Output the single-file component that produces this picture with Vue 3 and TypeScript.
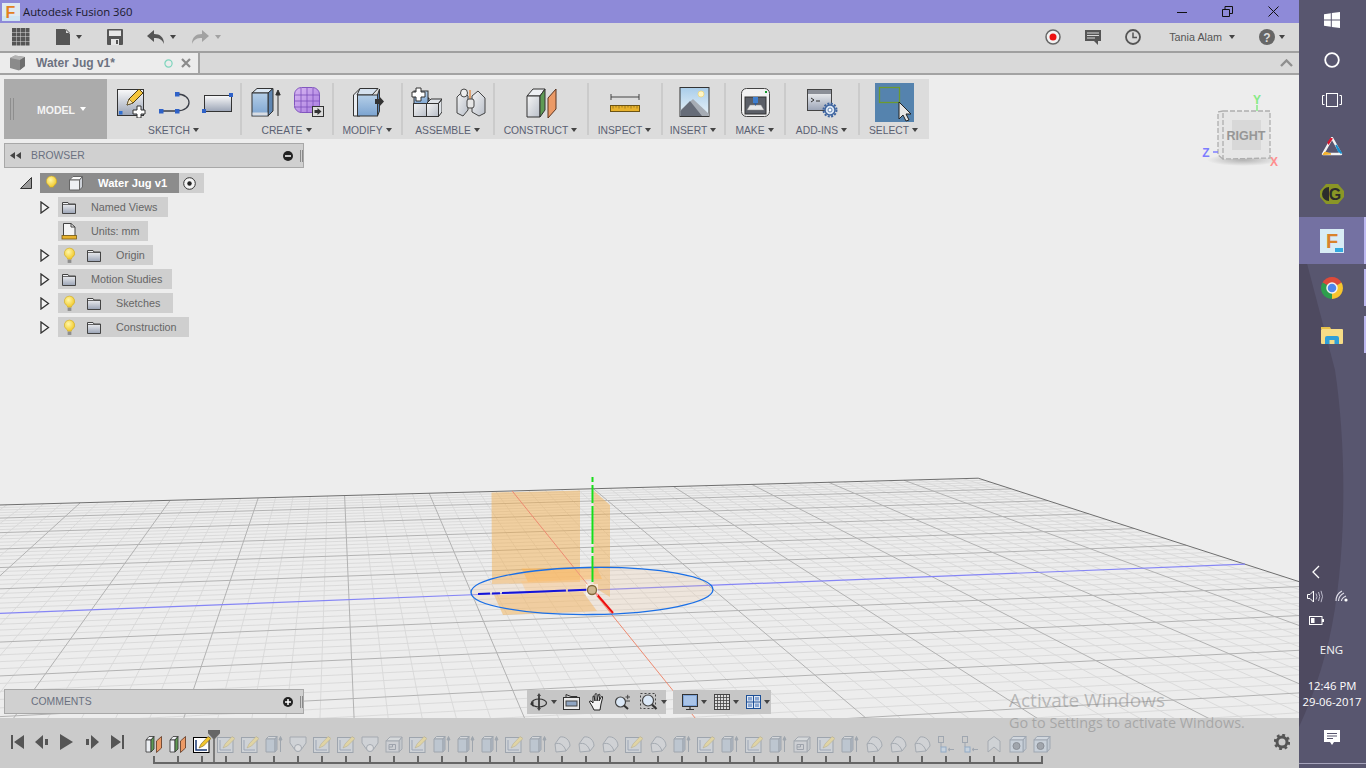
<script setup lang="ts">
const A = 0.0848, B = 0.45
function P(u: number, v: number): string {
  const d = 1 + u * A + v * B
  const x = (u * A * 8945 + v * B * 335 + 592) / d
  const y = (u * A * 260 + v * B * 271 + 590) / d
  return `${x.toFixed(1)},${y.toFixed(1)}`
}
interface GL { pts: string }
const minor: GL[] = []
const major: GL[] = []
for (let k = -30; k <= 30; k++) {
  const t = k / 30
  const list = k % 5 === 0 ? major : minor
  if (Math.abs(k) !== 30 && k !== 0) {
    list.push({ pts: `${P(t, -1)} ${P(t, 1)}` })
    list.push({ pts: `${P(-1, t)} ${P(1, t)}` })
  }
}
const edge = `${P(-1, 1)} ${P(1, 1)} ${P(1, -1)}`
const blueAxis = `${P(-1, 0)} ${P(1, 0)}`
const redAxis = `${P(0, 1)} ${P(0, -1)}`

const groups = [
  { label: 'SKETCH', w: 134, icons: ['sk-new', 'sk-arc', 'sk-rect'] },
  { label: 'CREATE', w: 92, icons: ['cr-ext', 'cr-form'] },
  { label: 'MODIFY', w: 69, icons: ['mod'] },
  { label: 'ASSEMBLE', w: 92, icons: ['asm', 'joint'] },
  { label: 'CONSTRUCT', w: 94, icons: ['con'] },
  { label: 'INSPECT', w: 74, icons: ['ins'] },
  { label: 'INSERT', w: 63, icons: ['pic'] },
  { label: 'MAKE', w: 60, icons: ['make'] },
  { label: 'ADD-INS', w: 74, icons: ['add'] },
]

const tree = [
  { label: 'Named Views', bulb: false, icon: 'folder', toggle: true, w: 110 },
  { label: 'Units: mm', bulb: false, icon: 'units', toggle: false, w: 90 },
  { label: 'Origin', bulb: true, icon: 'folder', toggle: true, w: 95 },
  { label: 'Motion Studies', bulb: false, icon: 'folder', toggle: true, w: 114 },
  { label: 'Sketches', bulb: true, icon: 'folder', toggle: true, w: 115 },
  { label: 'Construction', bulb: true, icon: 'folder', toggle: true, w: 131 },
]

const seq = 'c c S k k e p k k p b k e e e k e f f f k f e k e k e b k e f f f s s l o o'.split(' ')
const tlMap: Record<string, string> = {
  c: 't-con', S: 't-sel', k: 't-sk', e: 't-ext', p: 't-plug', b: 't-box',
  f: 't-fil', s: 't-split', l: 't-loft', o: 't-coin',
}
const timeline = seq.map((s) => ({ id: tlMap[s], faded: s !== 'c' && s !== 'S' }))
const gridCells = Array.from({ length: 16 }, (_, i) => ({ x: (i % 4) * 4.5, y: Math.floor(i / 4) * 4.5 }))
</script>

<template>
  <div class="screen">
    <svg class="sprite" aria-hidden="true">
      <defs>
        <linearGradient id="gSheet" x1="0" y1="0" x2="0" y2="1"><stop offset="0" stop-color="#fafafa"/><stop offset="1" stop-color="#9aa3b5"/></linearGradient>
        <linearGradient id="gBlue" x1="0" y1="0" x2="0" y2="1"><stop offset="0" stop-color="#b5cfe8"/><stop offset="1" stop-color="#7ba3d0"/></linearGradient>
        <linearGradient id="gGrey" x1="0" y1="0" x2="1" y2="1"><stop offset="0" stop-color="#f5f5f5"/><stop offset="1" stop-color="#b9bfc9"/></linearGradient>
        <linearGradient id="gSky" x1="0" y1="0" x2="0" y2="1"><stop offset="0" stop-color="#a9cdea"/><stop offset="1" stop-color="#eaf3f8"/></linearGradient>
        <linearGradient id="gPurple" x1="0" y1="0" x2="1" y2="1"><stop offset="0" stop-color="#d9b8f2"/><stop offset="1" stop-color="#a77adf"/></linearGradient>
        <radialGradient id="gBulb" cx=".4" cy=".35" r=".7"><stop offset="0" stop-color="#fff7a8"/><stop offset="1" stop-color="#f0c520"/></radialGradient>
      </defs>

      <symbol id="sk-new" viewBox="0 0 32 32">
        <rect x="3.5" y="3.5" width="26" height="26" fill="url(#gSheet)" stroke="#333"/>
        <rect x="5" y="25" width="3.5" height="3.5" fill="#2f6fd0"/>
        <path d="M13 19l2-6 10-10 4 4-10 10z" fill="#f4c53c" stroke="#4a3b15"/>
        <path d="M13 19l2-6 4 4z" fill="#f7e6bd" stroke="#4a3b15" stroke-width=".6"/>
        <path d="M23 20h4v4h4v4h-4v4h-4v-4h-4v-4h4z" fill="#fff" stroke="#333"/>
      </symbol>
      <symbol id="sk-arc" viewBox="0 0 32 32">
        <path d="M3 25H19M19 8C35 8 35 25 19 25" fill="none" stroke="#3b3f48" stroke-width="1.3"/>
        <rect x="1" y="23" width="4.5" height="4.5" fill="#2f62c8"/><rect x="17" y="23" width="4.5" height="4.5" fill="#2f62c8"/><rect x="17" y="6" width="4.5" height="4.5" fill="#2f62c8"/>
      </symbol>
      <symbol id="sk-rect" viewBox="0 0 32 32">
        <rect x="2.5" y="9.5" width="27" height="16" fill="url(#gSheet)" stroke="#333"/>
        <rect x="27" y="7" width="4" height="4" fill="#2f62c8"/><rect x="0" y="23" width="4" height="4" fill="#2f62c8"/>
      </symbol>
      <symbol id="cr-ext" viewBox="0 0 32 32">
        <path d="M3 7L8 2.5H24L19 7z" fill="#dbe7f3" stroke="#333"/>
        <path d="M19 7L24 2.5V25L19 30z" fill="#5f86b2" stroke="#333"/>
        <rect x="3" y="7" width="16" height="23" fill="url(#gBlue)" stroke="#333"/>
        <rect x="3.5" y="26.5" width="15" height="3" fill="#d9dde3"/>
        <path d="M29 30V6M26.8 9L29 4L31.2 9z" stroke="#333" fill="#333"/>
      </symbol>
      <symbol id="cr-form" viewBox="0 0 32 32">
        <rect x="1.5" y="1.5" width="25" height="25" rx="7" fill="url(#gPurple)" stroke="#8257bf"/>
        <path d="M1 9H27M1 15H27M1 21H27M8 2V27M14 2V27M20 2V27" stroke="#7c4fbb" stroke-width=".8" fill="none"/>
        <rect x="19.5" y="20.5" width="11" height="10" fill="#dcdcdc" stroke="#333"/>
        <path d="M21.5 24h3v-2l4 3.5-4 3.5v-2h-3z" fill="#333"/>
      </symbol>
      <symbol id="mod" viewBox="0 0 32 32">
        <path d="M1.5 9L8 2.5V30H1.5z" fill="#e9edf2" stroke="#333"/>
        <path d="M8 2.5H26L20 9H5z" fill="#d5e1ee" stroke="#333"/>
        <rect x="5.5" y="9" width="20" height="21" fill="url(#gBlue)" stroke="#333"/>
        <path d="M25.5 9l2-6V25l-2 5z" fill="#5d83af" stroke="#333"/>
        <path d="M23 13h4v-3l5 5.5-5 5.5v-3h-4z" fill="#333"/>
      </symbol>
      <symbol id="asm" viewBox="0 0 32 32">
        <path d="M5 16L9 12H19L15 16zM15 16L19 12V20L15 24z" fill="#7ba3d0" stroke="#333"/>
        <rect x="4" y="5" width="14" height="14" fill="url(#gBlue)" stroke="#333"/>
        <rect x="3.5" y="17.5" width="13" height="13" fill="url(#gGrey)" stroke="#333"/>
        <rect x="16.5" y="17.5" width="12" height="13" fill="url(#gGrey)" stroke="#333"/>
        <path d="M16.5 17.5L21 13H32L28.5 17.5zM28.5 17.5L32 13V26L28.5 30.5z" fill="#dfe3e8" stroke="#333"/>
        <path d="M6 2h5v4h4v5h-4v4H6v-4H2V6h4z" fill="#fff" stroke="#333"/>
      </symbol>
      <symbol id="joint" viewBox="0 0 32 32">
        <path d="M3 11L9 5 14 10V24L9 30 3 27z" fill="url(#gGrey)" stroke="#444"/>
        <path d="M18 10L24 5 31 12V27L25 30 18 26z" fill="url(#gGrey)" stroke="#444"/>
        <ellipse cx="10" cy="7" rx="3.5" ry="4" fill="#eee" stroke="#444"/>
        <path d="M16 4V22" stroke="#e0843a" stroke-width="1.3"/>
        <rect x="13" y="13" width="7" height="9" rx="2" fill="#e7e7e7" stroke="#444"/>
      </symbol>
      <symbol id="con" viewBox="0 0 32 32">
        <path d="M2 10L8 3H20L15 10z" fill="#eef0f3" stroke="#333"/>
        <path d="M2 10H15V31H2z" fill="url(#gGrey)" stroke="#333"/>
        <path d="M15 10L20 3V24L15 31z" fill="#5e9a54" stroke="#333"/>
        <path d="M23 12L31 3V23L23 32z" fill="#ec9a66" stroke="#5a3420"/>
      </symbol>
      <symbol id="ins" viewBox="0 0 32 32">
        <path d="M2 8v6M2 11H30M30 8v6" stroke="#444" fill="none"/>
        <rect x="1.5" y="19.5" width="29" height="6" fill="#e8b22c" stroke="#6d5414"/>
        <path d="M4 19.5v3M7 19.5v2M10 19.5v3M13 19.5v2M16 19.5v3M19 19.5v2M22 19.5v3M25 19.5v2M28 19.5v3" stroke="#6d5414" stroke-width=".6"/>
      </symbol>
      <symbol id="pic" viewBox="0 0 32 32">
        <rect x="2" y="1.5" width="29" height="29" fill="url(#gSky)" stroke="#333"/>
        <circle cx="23" cy="8" r="3" fill="#fff6c6" stroke="#f0d060" stroke-width=".6"/>
        <path d="M2.5 24L15 13 31 28V30H2.5z" fill="#a6acb4"/>
        <path d="M2.5 25L12 15 24 30H2.5z" fill="#666c78"/>
      </symbol>
      <symbol id="make" viewBox="0 0 32 32">
        <rect x="2.5" y="2.5" width="28" height="28" rx="5" fill="#f2f2f2" stroke="#444"/>
        <rect x="6" y="11" width="21" height="17" fill="#5b5f67" stroke="#333"/>
        <rect x="26" y="5" width="2" height="2" fill="#139a2a"/>
        <path d="M8 24L11 19H22L25 24z" fill="#e7e7e7" stroke="#888" stroke-width=".5"/>
        <rect x="14" y="11" width="5" height="6" fill="#3f7fd0"/><path d="M15 17h3l-1.5 3z" fill="#2b5da0"/>
      </symbol>
      <symbol id="add" viewBox="0 0 32 32">
        <rect x="1.5" y="3.5" width="24" height="21" fill="url(#gSheet)" stroke="#444"/>
        <rect x="2" y="4" width="23" height="4" fill="#8b8f98"/>
        <path d="M5 12l3 2-3 2M10 15h4" stroke="#333" fill="none"/>
        <circle cx="24" cy="24" r="5" fill="#dbe7f5" stroke="#3d64a0" stroke-width="1.5"/>
        <circle cx="24" cy="24" r="6.5" fill="none" stroke="#3d64a0" stroke-width="2" stroke-dasharray="2 1.4"/>
        <circle cx="24" cy="24" r="2" fill="#fff" stroke="#3d64a0" stroke-width=".8"/>
      </symbol>
      <symbol id="sel" viewBox="0 0 40 40">
        <rect x="1" y="0" width="39" height="39" fill="#5583ae"/>
        <rect x="5.5" y="4.5" width="20" height="15" fill="none" stroke="#6d9a2f" stroke-width="1.3"/>
        <path d="M25 19V36L29 32 32 38 35 37 32 31H37z" fill="#e6e6e6" stroke="#222"/>
      </symbol>

      <symbol id="folder" viewBox="0 0 16 16">
        <path d="M1.5 3.5H7L8 5H14.5V14.5H1.5z" fill="url(#gSheet)" stroke="#444"/>
        <path d="M1.5 5.5H14.5" stroke="#444" stroke-width=".8"/>
      </symbol>
      <symbol id="units" viewBox="0 0 16 18">
        <path d="M2.5 1.5H10L14 5V14H2.5z" fill="#f4f4f4" stroke="#444"/>
        <path d="M10 1.5V5H14" fill="none" stroke="#444"/>
        <rect x="1" y="13.5" width="14.5" height="3.5" fill="#e8b22c" stroke="#7a5c14" stroke-width=".8"/>
      </symbol>
      <symbol id="bulb" viewBox="0 0 14 18">
        <path d="M7 1a5.5 5.5 0 0 1 3.2 10c-.7.6-1.2 1-1.2 2H5c0-1-.5-1.4-1.2-2A5.5 5.5 0 0 1 7 1z" fill="url(#gBulb)" stroke="#caa41d" stroke-width=".6"/>
        <rect x="5" y="13.5" width="4" height="3.5" fill="#8d8d8d"/>
      </symbol>
      <symbol id="cube" viewBox="0 0 16 16">
        <path d="M1.5 5L5 1.5H14.5L11.5 5z" fill="#fafafa" stroke="#666"/>
        <path d="M1.5 5H11.5V15H1.5z" fill="#eef0f3" stroke="#666"/>
        <path d="M11.5 5L14.5 1.5V12L11.5 15z" fill="#cdd1d8" stroke="#666"/>
      </symbol>

      <symbol id="t-con" viewBox="0 0 18 18">
        <path d="M1 5L4 1.5H9L6 5z" fill="#eef0f3" stroke="#333" stroke-width=".8"/>
        <path d="M1 5H6V17H1z" fill="#eceff3" stroke="#333" stroke-width=".8"/>
        <path d="M6 5L9 1.5V14L6 17z" fill="#5e9a54" stroke="#333" stroke-width=".8"/>
        <path d="M11.5 6L16.5 1.5V13L11.5 17.5z" fill="#ec9a66" stroke="#5a3420" stroke-width=".8"/>
      </symbol>
      <symbol id="t-sel" viewBox="0 0 18 18">
        <rect x=".5" y="2.5" width="15.5" height="15" fill="#fff" stroke="#000"/>
        <path d="M3 5V15H14" fill="none" stroke="#1b3a74" stroke-width="1.5"/>
        <path d="M6 13L8 9 15 1.5 18 3.5 10.5 11z" fill="#f2c62e" stroke="#5d4713" stroke-width=".5"/>
      </symbol>
      <symbol id="t-sk" viewBox="0 0 18 18">
        <rect x=".5" y="2.5" width="15.5" height="15" fill="#d0d5dc" stroke="#8b95a2"/>
        <path d="M3 5V15H14" fill="none" stroke="#8b98ad" stroke-width="1"/>
        <path d="M6 13L8 9 15 1.5 18 3.5 10.5 11z" fill="#e9d894" stroke="#a89f73" stroke-width=".5"/>
      </symbol>
      <symbol id="t-ext" viewBox="0 0 18 18">
        <path d="M1 4L3.5 1.5H12L10 4z" fill="#d9dde2" stroke="#8d97a3"/>
        <path d="M1 4H10V17H1z" fill="#b8c5d3" stroke="#8d97a3"/>
        <path d="M10 4L12 1.5V14.5L10 17z" fill="#a3b1c1" stroke="#8d97a3"/>
        <path d="M15.5 17V3M14 5L15.5 1.5 17 5z" stroke="#8d97a3" fill="#8d97a3"/>
      </symbol>
      <symbol id="t-plug" viewBox="0 0 18 18">
        <path d="M1 2H17V8L12 15C10 17 8 17 6 15L1 8z" fill="#d2d6db" stroke="#949ca6"/>
        <circle cx="9" cy="13" r="3.5" fill="#e4e6e8" stroke="#949ca6"/>
      </symbol>
      <symbol id="t-box" viewBox="0 0 18 18">
        <path d="M1 6L5 2H17L14 6z" fill="#dcdfe3" stroke="#949ca6"/>
        <path d="M14 6L17 2V14L14 17z" fill="#c2c7cd" stroke="#949ca6"/>
        <rect x="1" y="6" width="13" height="11" fill="#ced2d7" stroke="#949ca6"/>
        <path d="M4 9.5H10.5V14.5H4zM4 12H7.5V9.5" fill="none" stroke="#8b93a0"/>
      </symbol>
      <symbol id="t-fil" viewBox="0 0 18 18">
        <path d="M2 9L7 2C12 1 17 5 17 11L13 16 3 17z" fill="#d3d6da" stroke="#949ca6"/>
        <path d="M2 9C7 7 11 10 13 16" fill="none" stroke="#949ca6"/>
      </symbol>
      <symbol id="t-split" viewBox="0 0 18 18">
        <rect x="1.5" y="1.5" width="5" height="6" fill="none" stroke="#8f98a6"/>
        <path d="M4 7.5V12" stroke="#8f98a6"/>
        <rect x="4" y="12" width="5" height="5" fill="#c6d6e6" stroke="#7d9dc2"/>
        <path d="M17 14.5H11.5M13 13L11 14.5 13 16" fill="none" stroke="#8f98a6"/>
      </symbol>
      <symbol id="t-loft" viewBox="0 0 18 18">
        <path d="M3 17V6L9 1.5 15 6V17L9 12z" fill="#d2d6da" stroke="#949ca6"/>
      </symbol>
      <symbol id="t-coin" viewBox="0 0 18 18">
        <path d="M1 5L4 1.5H17L14 5z" fill="#d4dde7" stroke="#8d99a8"/>
        <path d="M14 5L17 1.5V13.5L14 17z" fill="#bdc9d6" stroke="#8d99a8"/>
        <rect x="1" y="5" width="13" height="12" fill="#c8d3df" stroke="#8d99a8"/>
        <circle cx="7.5" cy="11" r="3.5" fill="#8e959f" stroke="#6f7680"/>
      </symbol>
    </svg>

    <div class="main">
      <header class="titlebar">
        <svg width="18" height="18" viewBox="0 0 18 18">
          <rect width="18" height="18" fill="#dfe9ef"/><rect x="0" y="13" width="18" height="5" fill="#cfe4f2"/>
          <text x="3.5" y="15" font-size="16" font-weight="700" font-family="Liberation Sans, sans-serif" fill="#e2801f">F</text>
        </svg>
        <span class="tb-text">Autodesk Fusion 360</span>
        <div class="winctl">
          <svg width="10" height="10" viewBox="0 0 10 10"><path d="M0 5.5H10" stroke="#111"/></svg>
          <svg width="11" height="11" viewBox="0 0 11 11"><path d="M.5 3.5H7.5V10.5H.5zM3 3.5V.5H10.5V7.5H7.5" fill="none" stroke="#111"/></svg>
          <svg width="11" height="11" viewBox="0 0 11 11"><path d="M.5 .5L10.5 10.5M10.5 .5L.5 10.5" stroke="#111"/></svg>
        </div>
      </header>

      <div class="qbar">
        <svg width="18" height="18" viewBox="0 0 18 18"><rect v-for="(c, i) in gridCells" :key="i" :x="c.x" :y="c.y" width="4" height="4" fill="#555"/></svg>
        <svg class="q-doc" width="14" height="16" viewBox="0 0 14 16"><path d="M0 0H9L14 5V16H0zM10 0V4H14z" fill="#555"/></svg>
        <i class="caret dark q-c1"></i>
        <svg class="q-save" width="16" height="16" viewBox="0 0 16 16"><path d="M0 1Q0 0 1 0H15Q16 0 16 1V15Q16 16 15 16H1Q0 16 0 15z" fill="#555"/><rect x="2" y="1.5" width="12" height="5.5" fill="#e6e6e6"/><rect x="4" y="10" width="8" height="6" fill="#e6e6e6"/><rect x="9" y="11" width="2" height="4" fill="#555"/></svg>
        <svg class="q-undo" width="17" height="14" viewBox="0 0 17 14"><path d="M7 0V4C13 4 17 7 17 14 15 9 12 8 7 8V12L0 6z" fill="#555"/></svg>
        <i class="caret dark q-c2"></i>
        <svg class="q-redo" width="17" height="14" viewBox="0 0 17 14"><path d="M10 0V4C4 4 0 7 0 14 2 9 5 8 10 8V12L17 6z" fill="#a2a2a2"/></svg>
        <i class="caret light q-c3"></i>
        <div class="q-right">
          <svg width="16" height="16" viewBox="0 0 16 16"><circle cx="8" cy="8" r="7" fill="#f2f2f2" stroke="#666" stroke-width="1.5"/><circle cx="8" cy="8" r="3.5" fill="#e11"/></svg>
          <svg class="q-chat" width="16" height="15" viewBox="0 0 16 15"><path d="M0 0H16V11H13V15L9 11H0z" fill="#555"/><path d="M2 3H14M2 5.5H14M2 8H10" stroke="#d9d9d9"/></svg>
          <svg class="q-clock" width="16" height="16" viewBox="0 0 16 16"><circle cx="8" cy="8" r="7" fill="none" stroke="#555" stroke-width="1.8"/><path d="M8 3.5V8.5H12" fill="none" stroke="#555" stroke-width="1.5"/></svg>
          <span class="q-user">Tania Alam</span>
          <i class="caret dark q-c4"></i>
          <svg class="q-help" width="16" height="16" viewBox="0 0 16 16"><circle cx="8" cy="8" r="8" fill="#666"/><text x="8" y="12.5" text-anchor="middle" font-size="12" font-weight="700" font-family="Liberation Sans, sans-serif" fill="#ddd">?</text></svg>
          <i class="caret dark q-c5"></i>
        </div>
      </div>

      <div class="tabs">
        <div class="tab">
          <svg width="17" height="16" viewBox="0 0 17 16"><path d="M1 3L6 .5 16 2V11L10 15.5 1 13z" fill="#8b8b8b"/><path d="M1 3L11 5 16 2 6 .5z" fill="#b3b3b3"/><path d="M11 5V15L16 11V2z" fill="#6e6e6e"/></svg>
          <span class="tab-name">Water Jug v1*</span>
          <svg class="tab-dot" width="9" height="9" viewBox="0 0 9 9"><circle cx="4.5" cy="4.5" r="3.6" fill="none" stroke="#7ed5bd" stroke-width="1.2"/></svg>
          <svg class="tab-x" width="10" height="10" viewBox="0 0 10 10"><path d="M1 1L9 9M9 1L1 9" stroke="#8b8b8b" stroke-width="2.2"/></svg>
        </div>
        <svg class="tab-up" width="13" height="8" viewBox="0 0 13 8"><path d="M1 7L6.5 1.5 12 7" fill="none" stroke="#8f8f8f" stroke-width="2.4"/></svg>
      </div>

      <div class="canvas">
        <svg class="scene" width="1299" height="643" viewBox="0 75 1299 643">
          <polyline v-for="(l, i) in minor" :key="'m' + i" :points="l.pts" fill="none" stroke="#d8d8d8" stroke-width=".9"/>
          <polyline v-for="(l, i) in major" :key="'j' + i" :points="l.pts" fill="none" stroke="#b2b2b2" stroke-width="1"/>
          <polyline :points="edge" fill="none" stroke="#6e6e6e" stroke-width="1"/>
          <polyline :points="blueAxis" fill="none" stroke="#8585f5" stroke-width="1.2"/>
          <path d="M491.5 492.5L580 490.5V582L492 584z" fill="#f5ad45" fill-opacity=".46"/>
          <path d="M593.5 490.5L610 505V597L593.5 587z" fill="#f5ad45" fill-opacity=".46"/>
          <path d="M521.5 568.5L597 568 602 579 528 582z" fill="#ffb24d" fill-opacity=".55"/>
          <path d="M521 581L583 579 590 592 527 594z" fill="#ffc477" fill-opacity=".4"/>
          <path d="M494 595L583 592 597 611 503 615z" fill="#f5ad45" fill-opacity=".46"/>
          <polyline :points="redAxis" fill="none" stroke="#ee8a70" stroke-width="1"/>
          <ellipse cx="592" cy="591" rx="121" ry="23.5" transform="rotate(-.7 592 591)" fill="#f3c9a0" fill-opacity=".22" stroke="#1a6fe6" stroke-width="1.3"/>
          <path d="M592.5 477V582" stroke="#18dd18" stroke-width="2" stroke-dasharray="5 3 18 3 38 3 6 3 35 0"/>
          <path d="M478 594L592 589.5" stroke="#1414d8" stroke-width="2" stroke-dasharray="12 2 8 2 28 0 36 2 40 0"/>
          <path d="M594 591L613 613" stroke="#ee1010" stroke-width="2"/>
          <rect x="586" y="584" width="12" height="12" fill="#fff" fill-opacity=".55"/>
          <circle cx="592" cy="590" r="4.5" fill="#cdb891" stroke="#80683a" stroke-width="1.3"/>
        </svg>

        <svg class="cube-nav" width="90" height="90" viewBox="0 -10 90 90">
          <defs><radialGradient id="gShadow"><stop offset="0" stop-color="#999" stop-opacity=".7"/><stop offset="1" stop-color="#999" stop-opacity="0"/></radialGradient></defs>
          <ellipse cx="47" cy="65" rx="36" ry="6" fill="url(#gShadow)"/>
          <path d="M22 17L27 16H74V63L27 64 22 60z" fill="#e6e6e6"/>
          <path d="M27 16H74V63L27 64zM27 16L22 17V60L27 64" fill="none" stroke="#aeaeae" stroke-width="1.3" stroke-dasharray="5 2"/>
          <rect x="36" y="25" width="29" height="30" fill="#d8d8d8"/>
          <text x="50" y="45" text-anchor="middle" font-size="12.5" font-weight="700" font-family="Liberation Sans, sans-serif" fill="#969696">RIGHT</text>
          <text x="61" y="9" text-anchor="middle" font-size="12" font-weight="700" font-family="Liberation Sans, sans-serif" fill="#86ea86">Y</text>
          <path d="M61 10V16" stroke="#86ea86" stroke-width="1.5"/>
          <text x="10" y="62" text-anchor="middle" font-size="12" font-weight="700" font-family="Liberation Sans, sans-serif" fill="#7d7dff">Z</text>
          <path d="M17 57H22" stroke="#7d7dff" stroke-width="1.5"/>
          <text x="78" y="71" text-anchor="middle" font-size="12" font-weight="700" font-family="Liberation Sans, sans-serif" fill="#ff8f8f">X</text>
        </svg>

        <div class="overlay">
          <div class="toolbar">
            <div class="model">
              <i class="grip"></i>
              <span class="model-t">MODEL</span>
              <i class="caret white"></i>
            </div>
            <div v-for="g in groups" :key="g.label" class="group" :style="{ width: g.w + 'px' }">
              <div class="g-icons">
                <svg v-for="id in g.icons" :key="id" class="ic" width="32" height="32"><use :href="'#' + id"/></svg>
              </div>
              <div class="g-label">{{ g.label }}<i class="caret dark small"></i></div>
            </div>
            <div class="group last">
              <div class="g-icons">
                <svg class="ic-sel" width="40" height="40"><use href="#sel"/></svg>
              </div>
              <div class="g-label">SELECT<i class="caret dark small"></i></div>
            </div>
          </div>

          <div class="panel p-browser">
            <svg width="11" height="7" viewBox="0 0 11 7"><path d="M5 0V7L0 3.5zM11 0V7L6 3.5z" fill="#444"/></svg>
            <span class="p-title">BROWSER</span>
            <svg class="p-btn" width="10" height="10" viewBox="0 0 10 10"><circle cx="5" cy="5" r="5" fill="#222"/><path d="M2 5H8" stroke="#fff" stroke-width="1.5"/></svg>
            <i class="p-grip"></i>
          </div>

          <div class="tree">
            <div class="row root">
              <svg class="root-tg" width="12" height="12" viewBox="0 0 12 12"><path d="M.5 11.5L11.5 .5V11.5z" fill="#9a9a9a" stroke="#333"/></svg>
              <div class="chip dark">
                <svg class="c-bulb" width="13" height="17"><use href="#bulb"/></svg>
                <svg class="c-ic" width="16" height="16"><use href="#cube"/></svg>
                <span>Water Jug v1</span>
              </div>
              <div class="chip radio">
                <svg width="13" height="13" viewBox="0 0 13 13"><circle cx="6.5" cy="6.5" r="5.8" fill="#f4f4f4" stroke="#333"/><circle cx="6.5" cy="6.5" r="2.2" fill="#222"/></svg>
              </div>
            </div>
            <div v-for="r in tree" :key="r.label" class="row">
              <svg v-if="r.toggle" class="tg" width="10" height="13" viewBox="0 0 10 13"><path d="M1 1L8.5 6.5 1 12z" fill="#f3f3f3" stroke="#333" stroke-width="1.3"/></svg>
              <i v-else class="tg"></i>
              <div class="chip" :style="{ width: r.w + 'px' }">
                <svg v-if="r.bulb" class="c-bulb" width="13" height="17"><use href="#bulb"/></svg>
                <svg class="c-ic" width="16" height="18"><use :href="'#' + r.icon"/></svg>
                <span>{{ r.label }}</span>
              </div>
            </div>
          </div>

          <div class="bottom">
            <div class="panel p-comments">
              <span class="p-title c">COMMENTS</span>
              <svg class="p-btn" width="10" height="10" viewBox="0 0 10 10"><circle cx="5" cy="5" r="5" fill="#222"/><path d="M2 5H8M5 2V8" stroke="#fff" stroke-width="1.5"/></svg>
              <i class="p-grip"></i>
            </div>
            <div class="nav n1">
              <svg width="18" height="18" viewBox="0 0 18 18"><path d="M9 0L11 3H10V15H11L9 18 7 15H8V3H7z" fill="#444"/><ellipse cx="9" cy="10" rx="7.5" ry="4" fill="none" stroke="#333" stroke-width="1.2"/><path d="M0 11L3.5 8V14z" fill="#333"/></svg>
              <i class="caret dark n-c"></i>
              <svg class="n-i" width="17" height="16" viewBox="0 0 17 16"><rect x=".5" y="3.5" width="16" height="12" fill="#e9e9e9" stroke="#333"/><rect x="3" y="7" width="11" height="5" fill="#8fa5c2" stroke="#444"/><path d="M3 3V.5L8 2.5H14V3.5" fill="none" stroke="#333"/></svg>
              <svg class="n-i2" width="16" height="18" viewBox="0 0 16 18"><path d="M4 10V4Q4 2.5 5 3L6 8V2Q6 .5 7.3 .5 8 1 8 2V8L9.5 1.5Q10.5 .5 11 2L10 8 12.5 3.5Q14 3 13.5 5L12 11 11 17H5L3 13 .5 9Q.5 7.5 2 8z" fill="#f3f3f3" stroke="#222"/></svg>
              <svg class="n-i3" width="17" height="16" viewBox="0 0 17 16"><circle cx="6.5" cy="8" r="5" fill="#dbe8f6" stroke="#444" stroke-width="1.2"/><path d="M10 11.5L14 15" stroke="#333" stroke-width="2"/><path d="M11.5 3H16M13.7 .8V5.2M11.5 7H16" stroke="#444" stroke-width="1"/></svg>
              <svg class="n-i4" width="18" height="18" viewBox="0 0 18 18"><rect x=".5" y=".5" width="15" height="15" fill="none" stroke="#444" stroke-dasharray="2 2"/><circle cx="8" cy="7.5" r="5.5" fill="#dbe8f6" stroke="#444" stroke-width="1.2"/><path d="M12 11.5L16.5 16" stroke="#333" stroke-width="2.2"/></svg>
              <i class="caret dark n-c2"></i>
            </div>
            <div class="nav n2">
              <svg width="16" height="17" viewBox="0 0 16 17"><rect x=".5" y=".5" width="15" height="12" fill="#7ea4d8" stroke="#333"/><rect x="2" y="2" width="12" height="9" fill="#a9c4e8"/><path d="M8 12.5V15M4 15.5H12" stroke="#333" stroke-width="1.2"/></svg>
              <i class="caret dark n-c"></i>
              <svg class="n-g" width="16" height="16" viewBox="0 0 16 16"><rect x=".5" y=".5" width="15" height="15" fill="#dedede" stroke="#444"/><path d="M3.5 .5V15.5M6.5 .5V15.5M9.5 .5V15.5M12.5 .5V15.5M.5 3.5H15.5M.5 6.5H15.5M.5 9.5H15.5M.5 12.5H15.5" stroke="#444" stroke-width=".8"/></svg>
              <i class="caret dark n-c"></i>
              <svg class="n-g" width="15" height="14" viewBox="0 0 15 14"><rect x=".5" y=".5" width="14" height="13" fill="#dfe7f2" stroke="#1c4f96"/><path d="M7.5 .5V13.5M.5 7H14.5" stroke="#1c4f96"/><rect x="2" y="2" width="4" height="3.5" fill="#87a5d2"/><rect x="9" y="2" width="4" height="3.5" fill="#87a5d2"/><rect x="2" y="8.5" width="4" height="3.5" fill="#87a5d2"/><rect x="9" y="8.5" width="4" height="3.5" fill="#87a5d2"/></svg>
              <i class="caret dark n-c"></i>
            </div>
          </div>
        </div>
      </div>

      <footer class="timeline">
        <div class="tl-ctl">
          <svg width="13" height="14" viewBox="0 0 13 14"><path d="M0 0H2V14H0zM13 0V14L3 7z" fill="#555"/></svg>
          <svg class="tl-b2" width="13" height="14" viewBox="0 0 13 14"><path d="M8 0V14L0 7zM10 4H13V10H10z" fill="#555"/></svg>
          <svg width="13" height="16" viewBox="0 0 13 16"><path d="M0 0L13 8 0 16z" fill="#555"/></svg>
          <svg width="13" height="14" viewBox="0 0 13 14"><path d="M5 0V14L13 7zM0 4H3V10H0z" fill="#555"/></svg>
          <svg width="13" height="14" viewBox="0 0 13 14"><path d="M0 0V14L10 7zM11 0H13V14H11z" fill="#555"/></svg>
        </div>
        <div class="track">
          <div v-for="(t, i) in timeline" :key="i" class="item" :class="{ faded: t.faded }">
            <svg width="18" height="18"><use :href="'#' + t.id"/></svg>
            <i class="tick"></i>
          </div>
          <i class="bar"></i>
          <svg class="playhead" width="12" height="34" viewBox="0 0 12 34"><path d="M0 0H12V3L6.5 9V34H5.5V9L0 3z" fill="#666" stroke="#666" stroke-width=".6"/></svg>
        </div>
        <svg class="gear" width="16" height="16" viewBox="0 0 16 16"><circle cx="8" cy="8" r="5" fill="none" stroke="#555" stroke-width="3"/><circle cx="8" cy="8" r="7" fill="none" stroke="#555" stroke-width="2.4" stroke-dasharray="2.8 2.7"/></svg>
      </footer>
    </div>

    <aside class="taskbar">
      <svg class="wall" width="67" height="768" viewBox="0 0 67 768"><path d="M0 233L36 370C48 450 48 560 30 640 20 680 10 705 0 727z" fill="#4e4a60"/></svg>
      <div class="tk tk-s">
        <svg width="16" height="16" viewBox="0 0 16 16"><path d="M0 2.3L6.8 1.3V7.5H0zM7.8 1.1L16 0V7.5H7.8zM0 8.5H6.8V14.7L0 13.7zM7.8 8.5H16V16L7.8 14.9z" fill="#fff"/></svg>
      </div>
      <div class="tk tk-s">
        <svg width="16" height="16" viewBox="0 0 16 16"><circle cx="8" cy="8" r="6.8" fill="none" stroke="#fff" stroke-width="1.8"/></svg>
      </div>
      <div class="tk tk-s">
        <svg width="20" height="14" viewBox="0 0 20 14"><path d="M2.5 2.5H.5V11.5H2.5M17.5 2.5H19.5V11.5H17.5" fill="none" stroke="#fff"/><rect x="4.5" y=".5" width="11" height="13" fill="none" stroke="#fff"/></svg>
      </div>
      <div class="tk tk-m first">
        <svg width="22" height="20" viewBox="0 0 22 20"><path d="M11 1L2 17 20 17z" fill="none" stroke="#f3f3f3" stroke-width="2.4" stroke-linejoin="round"/><path d="M12 1.5L7.5 8 6.2 5.5 9.5 .8z" fill="#d8172f"/><path d="M15 8L20.5 16.5 17.5 14z" fill="#1690cf" stroke="#1690cf" stroke-width="1.5"/><path d="M2 17.5L10 17 4 15z" fill="#f3b12c" stroke="#f3b12c" stroke-width="1"/></svg>
      </div>
      <div class="tk tk-m">
        <svg width="24" height="22" viewBox="0 0 24 22"><path d="M6 1H18L24 8V14L18 21H6L0 14V8z" fill="#8a9626"/><path d="M9 4A7 7 0 0 0 9 18z" fill="#2c2c2c"/><text x="15" y="17" text-anchor="middle" font-size="16" font-weight="700" font-family="Liberation Sans, sans-serif" fill="#2c2c2c">G</text></svg>
      </div>
      <div class="tk tk-m active ind">
        <svg width="24" height="24" viewBox="0 0 24 24"><rect width="24" height="24" fill="#d8ecf5"/><text x="6" y="19" font-size="20" font-weight="700" font-family="Liberation Sans, sans-serif" fill="#d9822b">F</text><rect x="15" y="19" width="8" height="4" fill="#33a9e0"/></svg>
      </div>
      <div class="tk tk-m ind">
        <svg width="22" height="22" viewBox="0 0 22 22"><path d="M11 11L1.5 5.5A11 11 0 0 1 20.5 5.5z" fill="#dd4a3a"/><path d="M11 11L20.5 5.5A11 11 0 0 1 11 22z" fill="#f7c52d"/><path d="M11 11V22A11 11 0 0 1 1.5 5.5z" fill="#2e9e4d"/><circle cx="11" cy="11" r="5" fill="#4f86ec" stroke="#f3f3f3" stroke-width="1.5"/></svg>
      </div>
      <div class="tk tk-m ind">
        <svg width="22" height="18" viewBox="0 0 22 18"><path d="M0 3V1H9L10 3z" fill="#e8c24a"/><rect y="3" width="22" height="15" rx="1" fill="#f6dc86"/><path d="M4 18V12Q4 10 6 10H16Q18 10 18 12V18H13.5V14H8.5V18z" fill="#2f9fd8"/></svg>
      </div>
      <div class="tray">
        <div class="t-row t1"><svg width="9" height="14" viewBox="0 0 9 14"><path d="M8 1L2 7 8 13" fill="none" stroke="#fff" stroke-width="1.3"/></svg></div>
        <div class="t-row t2">
          <svg width="16" height="13" viewBox="0 0 16 13"><path d="M.5 4.5H3L6.5 1V12L3 8.5H.5z" fill="none" stroke="#fff"/><path d="M9 3.5Q11 6.5 9 9.5M11.5 2Q14 6.5 11.5 11M14 .8Q17 6.5 14 12.2" fill="none" stroke="#c8c6d6" stroke-width=".9"/></svg>
          <svg width="14" height="12" viewBox="0 0 14 12"><path d="M1 11Q1 4 7 1M3.5 11Q3.5 6 9 3M6.5 11Q6.5 8 11 6" fill="none" stroke="#e4e2ec" stroke-width="1.1"/><circle cx="11" cy="10" r="1.6" fill="#fff"/></svg>
        </div>
        <div class="t-row t3"><svg width="15" height="9" viewBox="0 0 15 9"><rect x=".5" y=".5" width="12.5" height="8" fill="none" stroke="#fff"/><rect x="2" y="2" width="3.5" height="5" fill="#fff"/><rect x="13" y="3" width="2" height="3" fill="#fff"/></svg></div>
        <div class="t-row t4">ENG</div>
        <div class="t-clock"><span>12:46 PM</span><span>29-06-2017</span></div>
        <div class="t-row t5"><svg width="16" height="16" viewBox="0 0 16 16"><path d="M0 0H16V12H10L8 15 6 12H0z" fill="#fff"/><path d="M3 3.5H13M3 6H13M3 8.5H9" stroke="#58566f"/></svg></div>
        <i class="t-line"></i>
      </div>
    </aside>

    <div class="activate">
      <div class="a1">Activate Windows</div>
      <div class="a2">Go to Settings to activate Windows.</div>
    </div>
  </div>
</template>

<style scoped>
.screen { position: relative; width: 1366px; height: 768px; display: flex; overflow: hidden; background: #ededed; font-family: "Liberation Sans", Arial, sans-serif; }
.sprite { position: absolute; width: 0; height: 0; }
.main { width: 1299px; height: 768px; display: flex; flex-direction: column; flex: none; }
svg { display: block; flex: none; }
i { display: block; flex: none; }

.caret { width: 0; height: 0; border-left: 3.5px solid transparent; border-right: 3.5px solid transparent; border-top: 4px solid #333; }
.caret.dark { border-top-color: #444; }
.caret.light { border-top-color: #a2a2a2; }
.caret.white { border-top-color: #fff; }
.caret.small { display: inline-block; border-left-width: 3px; border-right-width: 3px; border-top-width: 4px; margin-left: 3px; vertical-align: 2px; }

.titlebar { height: 23px; flex: none; background: #8e8ad8; display: flex; align-items: center; padding: 0 20px 0 2px; box-sizing: border-box; }
.tb-text { margin-left: 3px; font-family: "Open Sans", sans-serif; font-size: 11.3px; color: #1a1a2c; }
.winctl { margin-left: auto; display: flex; align-items: center; gap: 35px; }

.qbar { height: 30px; flex: none; box-sizing: border-box; border-bottom: 2px solid #a0a0a0; background: #d9d9d9; display: flex; align-items: center; padding-left: 12px; }
.q-doc { margin-left: 26px; }
.q-c1 { margin-left: 6px; }
.q-save { margin-left: 25px; }
.q-undo { margin-left: 24px; }
.q-c2 { margin-left: 6px; }
.q-redo { margin-left: 16px; }
.q-c3 { margin-left: 6px; }
.q-right { margin-left: auto; display: flex; align-items: center; padding-right: 14px; }
.q-chat { margin-left: 24px; }
.q-clock { margin-left: 24px; }
.q-user { margin-left: 28px; font-size: 10.8px; color: #555; }
.q-c4 { margin-left: 7px; }
.q-help { margin-left: 24px; }
.q-c5 { margin-left: 4px; }

.tabs { height: 22px; flex: none; box-sizing: border-box; border-bottom: 2px solid #a3a3a3; background: #d9d9d9; display: flex; align-items: center; }
.tab { width: 200px; height: 20px; box-sizing: border-box; border-right: 2px solid #a3a3a3; background: #ececec; display: flex; align-items: center; padding-left: 9px; }
.tab-name { margin-left: 10px; font-size: 12px; font-weight: 700; color: #6c7280; width: 130px; white-space: nowrap; }
.tab-dot { margin-left: -2px; }
.tab-x { margin-left: 8px; }
.tab-up { margin-left: auto; margin-right: 6px; }

.canvas { position: relative; flex: 1; min-height: 0; background: #ededed; overflow: hidden; }
.scene { position: absolute; left: 0; top: 0; }
.cube-nav { position: absolute; left: 1196px; top: 10px; }
.overlay { position: relative; height: 100%; display: flex; flex-direction: column; box-sizing: border-box; padding: 4px 0 4px 4px; }

.toolbar { display: flex; width: 925px; height: 60px; background: #dcdcdc; flex: none; }
.model { width: 103px; height: 60px; background: #ababab; display: flex; align-items: center; position: relative; flex: none; }
.grip { width: 4px; height: 22px; margin-left: 6px; box-sizing: border-box; border-left: 1px solid #8e8e8e; border-right: 1px solid #8e8e8e; }
.model-t { margin-left: 23px; margin-top: 2px; font-size: 10.5px; font-weight: 700; color: #f4f4f4; }
.model .caret { margin-left: 5px; margin-top: 0; }
.group { position: relative; flex: none; box-sizing: border-box; }
.group::after { content: ""; position: absolute; right: -1px; top: 4px; height: 52px; width: 2px; background: #cbcbcb; }
.group.last { flex: 1; }
.group.last::after { display: none; }
.g-icons { height: 40px; margin-top: 4px; display: flex; justify-content: center; gap: 12px; align-items: flex-start; }
.ic { margin-top: 3px; }
.ic-sel { margin-left: -1px; }
.g-label { margin-top: 1px; margin-left: -1px; text-align: center; font-size: 10.3px; line-height: 13px; color: #5a6072; white-space: nowrap; }

.panel { box-sizing: border-box; width: 300px; height: 25px; background: #d0d0d0; border: 1px solid #a8a8a8; display: flex; align-items: center; position: relative; flex: none; padding-left: 5px; }
.p-browser { margin-top: 4px; }
.p-title { margin-left: 10px; font-size: 10.4px; color: #6a7080; }
.p-title.c { margin-left: 21px; }
.p-btn { margin-left: auto; margin-right: 7px; }
.p-grip { width: 3px; height: 12px; box-sizing: border-box; border-left: 1px solid #8a8a8a; border-right: 1px solid #8a8a8a; margin-right: 0; }

.tree { margin-top: 5px; display: flex; flex-direction: column; gap: 4px; padding-left: 36px; }
.row { display: flex; align-items: center; height: 20px; color: #666; font-size: 10.8px; }
.tg { width: 10px; margin-right: 8px; }
.root { margin-left: -20px; }
.root-tg { margin-right: 8px; }
.chip { height: 20px; display: flex; align-items: center; background: #cfcfcf; padding: 0 0 0 3px; white-space: nowrap; box-sizing: border-box; }
.chip.dark { background: #8c8c8c; color: #fff; font-weight: 700; font-size: 11.2px; padding-right: 12px; }
.chip.radio { padding: 0 8px 0 4px; }
.c-bulb { margin-left: 2px; margin-right: 10px; }
.c-ic { margin-right: 14px; }

.bottom { margin-top: auto; display: flex; align-items: center; }
.nav { height: 24px; background: #c6c6c6; display: flex; align-items: center; box-sizing: border-box; flex: none; margin-top: 1px; }
.n1 { width: 139px; margin-left: 223px; padding-left: 3px; }
.n2 { width: 98px; margin-left: 7px; padding-left: 9px; }
.n-c { margin-left: 3px; }
.n-i { margin-left: 6px; }
.n-i2 { margin-left: 9px; }
.n-i3 { margin-left: 9px; }
.n-i4 { margin-left: 9px; }
.n-c2 { margin-left: 3px; }
.n-g { margin-left: 7px; }

.timeline { height: 50px; flex: none; background: #cbcbcb; display: flex; box-sizing: border-box; padding-left: 5px; position: relative; }
.tl-ctl { width: 125px; height: 50px; flex: none; display: flex; align-items: center; box-sizing: border-box; justify-content: space-between; padding: 0 6px 3px 6px; }
.tl-b2 { margin-left: -2px; }
.track { margin-left: 12px; display: flex; position: relative; height: 50px; flex: none; }
.item { width: 24px; flex: none; display: flex; flex-direction: column; align-items: center; padding-top: 17px; box-sizing: border-box; }
.item.faded svg { opacity: .7; }
.tick { width: 2px; height: 6px; background: #666; margin-top: 3px; }
.bar { position: absolute; left: 11px; right: 11px; top: 44px; height: 2px; background: #666; }
.playhead { position: absolute; left: 66px; top: 12px; }
.gear { margin-left: auto; margin-right: 9px; margin-top: 16px; }

.taskbar { width: 67px; height: 768px; flex: none; background: #58566f; position: relative; display: flex; flex-direction: column; color: #fff; font-family: "Open Sans", sans-serif; }
.wall { position: absolute; left: 0; top: 0; }
.tk { position: relative; display: flex; align-items: center; justify-content: center; flex: none; padding-right: 2px; }
.tk-s { height: 40px; }
.tk-m { height: 47px; }
.tk-m.first { margin-top: 3px; }
.active { background: #7471a2; }
.ind::after { content: ""; position: absolute; right: 0; top: 5px; bottom: 5px; width: 2px; background: #bdb9f0; }
.active.ind::after { top: 0; bottom: 0; }
.tray { margin-top: auto; position: relative; display: flex; flex-direction: column; align-items: center; }
.t-row { display: flex; align-items: center; justify-content: center; flex: none; width: 67px; box-sizing: border-box; }
.t1 { height: 24px; justify-content: flex-start; padding-left: 12px; }
.t2 { height: 24px; gap: 12px; justify-content: flex-start; padding-left: 8px; }
.t3 { height: 24px; justify-content: flex-start; padding-left: 10px; }
.t4 { height: 34px; font-size: 11.5px; color: #f2f2f2; padding-right: 2px; }
.t-clock { margin-top: 12px; height: 34px; display: flex; flex-direction: column; align-items: center; font-size: 11.3px; line-height: 16px; padding-right: 1px; }
.t5 { height: 28px; margin-top: 12px; padding-right: 2px; }
.t-line { width: 67px; height: 1px; background: #a5a3bb; margin-top: 11px; margin-bottom: 4px; }

.activate { position: absolute; left: 1009px; top: 688px; color: rgba(130, 130, 130, .5); font-family: "Open Sans", sans-serif; pointer-events: none; white-space: nowrap; }
.a1 { font-size: 19px; line-height: 25px; }
.a2 { font-size: 14.4px; line-height: 20px; }
</style>
